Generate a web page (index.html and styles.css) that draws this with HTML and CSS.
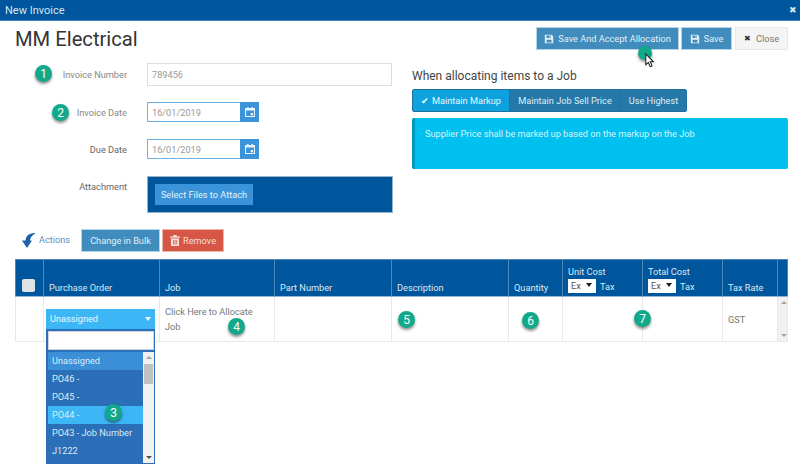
FILE: index.html
```html
<!DOCTYPE html>
<html lang="en">
<head>
  <meta charset="UTF-8">
  <title>New Invoice</title>
  <link rel="stylesheet" href="styles.css">
</head>
<body>
  <svg class="defs" width="0" height="0">
    <symbol id="icon-save" viewBox="0 0 12 12"><path fill-rule="evenodd" d="M1 1h8.200L11 2.800V11H1zM3 1.800v3h5.200v-3zM6.400 2.300h1.200v2H6.400zM3 7v3.200h6V7z"/></symbol>
    <symbol id="icon-cal" viewBox="0 0 14 14"><path fill-rule="evenodd" d="M3 0h2v1.500h4V0h2v1.500h3V14H0V1.500h3zM1.500 5v7.500h11V5zM8 8.500h3.200V11.500H8z"/></symbol>
  </svg>

  <div class="titlebar">
    <span>New Invoice</span>
    <span class="titlebar-close">✖</span>
  </div>

  <div class="top">
    <div class="left">
      <h1>MM Electrical</h1>
      <div class="form">
        <label>Invoice Number</label>
        <div class="input wide">789456</div>
        <label class="row-date">Invoice Date</label>
        <div class="date row-date">
          <div class="input">16/01/2019</div>
          <span class="cal"><svg width="14" height="14"><use href="#icon-cal"/></svg></span>
        </div>
        <label class="row-due">Due Date</label>
        <div class="date row-due">
          <div class="input">16/01/2019</div>
          <span class="cal"><svg width="14" height="14"><use href="#icon-cal"/></svg></span>
        </div>
        <label class="row-attach">Attachment</label>
        <div class="attach row-attach"><button class="btn btn-file">Select Files to Attach</button></div>
      </div>
    </div>

    <div class="right">
      <div class="toolbar">
        <button class="btn btn-blue btn-accept"><svg width="12" height="12"><use href="#icon-save"/></svg>Save And Accept Allocation</button>
        <button class="btn btn-blue btn-save"><svg width="12" height="12"><use href="#icon-save"/></svg>Save</button>
        <button class="btn btn-close"><span class="x">✖</span>Close</button>
      </div>
      <h2>When allocating items to a Job</h2>
      <div class="group">
        <span class="group-item active"><span class="tick">✔</span>Maintain Markup</span>
        <span class="group-item sell">Maintain Job Sell Price</span>
        <span class="group-item">Use Highest</span>
      </div>
      <div class="info">Supplier Price shall be marked up based on the markup on the Job</div>
    </div>
  </div>

  <div class="actions">
    <svg class="actions-arrow" width="14" height="15" viewBox="0 0 14 15"><path d="M13.500 0C8 0 3.800 2.200 3.600 7.500H0L5 15l5-7.500H8C8 5 9.800 2.500 13.500 0z"/></svg>
    <span class="actions-label">Actions</span>
    <button class="btn btn-blue btn-bulk">Change in Bulk</button>
    <button class="btn btn-red"><svg width="10" height="11" viewBox="0 0 10 11"><path fill-rule="evenodd" d="M3.500 0h3l.5 1.500h3v1.200H0V1.500h3zM1 3.500h8V11H1zM3 5v4.500h.8V5zm1.700 0v4.500h.8V5zm1.700 0v4.500h.8V5z"/></svg>Remove</button>
  </div>

  <table class="grid">
    <colgroup>
      <col class="c-check"><col class="c-po"><col class="c-job"><col class="c-part"><col class="c-desc">
      <col class="c-qty"><col class="c-cost"><col class="c-cost"><col class="c-tax"><col>
    </colgroup>
    <thead>
      <tr>
        <th><span class="checkbox"></span></th>
        <th>Purchase Order</th>
        <th>Job</th>
        <th>Part Number</th>
        <th>Description</th>
        <th>Quantity</th>
        <th>Unit Cost<div class="taxline"><span class="mini-select">Ex<i></i></span>Tax</div></th>
        <th>Total Cost<div class="taxline"><span class="mini-select">Ex<i></i></span>Tax</div></th>
        <th>Tax Rate</th>
        <th></th>
      </tr>
    </thead>
    <tbody>
      <tr>
        <td></td>
        <td class="po-cell">
          <div class="dropdown">
            <div class="dropdown-head">Unassigned<i></i></div>
            <div class="dropdown-panel">
              <div class="dropdown-search"></div>
              <div class="dropdown-body">
                <ul>
                  <li class="first">Unassigned</li>
                  <li>PO46 -</li>
                  <li>PO45 -</li>
                  <li class="hot">PO44 -</li>
                  <li>PO43 - Job Number</li>
                  <li>J1222</li>
                </ul>
                <div class="scroll">
                  <i class="up"></i>
                  <b></b>
                  <i class="down"></i>
                </div>
              </div>
            </div>
          </div>
        </td>
        <td class="job-cell">Click Here to Allocate<br>Job</td>
        <td></td>
        <td></td>
        <td></td>
        <td></td>
        <td></td>
        <td class="tax-cell">GST</td>
        <td class="row-scroll"><i class="up"></i><i class="down"></i></td>
      </tr>
    </tbody>
  </table>

  <!-- numbered callouts over the screenshot -->
  <span class="dot" style="left:35px;top:65px">1</span>
  <span class="dot" style="left:52px;top:104px">2</span>
  <span class="dot" style="left:105px;top:404px">3</span>
  <span class="dot" style="left:228px;top:318px">4</span>
  <span class="dot" style="left:398px;top:311px">5</span>
  <span class="dot" style="left:522px;top:312px">6</span>
  <span class="dot" style="left:634px;top:310px">7</span>
  <span class="dot dot-small" style="left:638px;top:46px"></span>
  <svg class="cursor" width="10" height="15" viewBox="0 0 13 19"><path d="M1 1v14l3.400-3 2.300 5.500 2.500-1-2.300-5.300H11z" fill="#fff" stroke="#222" stroke-width="1.400"/></svg>
</body>
</html>
```

FILE: styles.css
```css
html, body {
  margin: 0;
  padding: 0;
  height: 100%;
  overflow: hidden;
  background: #fff;
  font-family: Roboto, sans-serif;
  font-size: 9.200px;
  color: #555;
}

.defs {
  position: absolute;
}

.titlebar {
  display: flex;
  justify-content: space-between;
  align-items: center;
  height: 20px;
  padding: 0 3px 0 5px;
  background: #00569d;
  border-bottom: 1px solid #3f87c4;
  color: #d5e4f0;
  font-size: 11px;
}

.titlebar-close {
  font-size: 9px;
  color: #d5e4f0;
}

.top {
  display: flex;
  height: 208px;
}

.left {
  width: 397px;
  padding-left: 15px;
  box-sizing: border-box;
}

h1 {
  margin: 5px 0 0;
  font-size: 20.200px;
  line-height: 26px;
  font-weight: 400;
  color: #333;
}

.form {
  display: grid;
  grid-template-columns: 112px 246px;
  column-gap: 20px;
  margin-top: 11px;
  align-items: center;
}

.form label {
  text-align: right;
  color: #888;
}

.input {
  box-sizing: border-box;
  display: flex;
  align-items: center;
  height: 20px;
  padding-left: 4px;
  background: #fff;
  border: 1px solid #6db3e6;
  border-right: 0;
  color: #999;
  flex: 1;
}

.input.wide {
  height: 23px;
  border: 1px solid #ddd;
  width: 245px;
}

.date {
  display: flex;
  width: 112px;
}

.cal {
  display: flex;
  align-items: center;
  justify-content: center;
  width: 19px;
  height: 20px;
  background: #3b94d9;
}

.cal svg {
  width: 10px;
  height: 10px;
  fill: #e8f3fb;
}

.row-date {
  margin-top: 16px;
}

.row-due {
  margin-top: 17px;
}

.row-attach {
  margin-top: 17px;
  align-self: start;
}

label.row-attach {
  margin-top: 22px;
}

.form label.row-attach {
  color: #666;
}

.form label.row-due {
  color: #666;
}

.attach {
  box-sizing: border-box;
  display: flex;
  align-items: center;
  width: 246px;
  height: 37px;
  padding-left: 7px;
  background: #00569d;
  border: 1px solid #9cb4c9;
}

.btn {
  display: inline-flex;
  align-items: center;
  justify-content: center;
  box-sizing: border-box;
  margin: 0;
  padding: 0;
  border: 1px solid transparent;
  font-family: Roboto, sans-serif;
  font-size: 9.200px;
  white-space: nowrap;
}

.btn svg {
  fill: currentColor;
}

.btn-file {
  width: 98px;
  height: 21px;
  background: #3b94d9;
  color: #e4f1fb;
}

.btn-blue {
  background: #3f8cbd;
  border-color: #b5d3e7;
  color: #e3eff7;
}

.btn-accept {
  width: 143px;
  gap: 4px;
}

.btn-accept svg, .btn-save svg {
  width: 10px;
  height: 10px;
}

.btn-save {
  width: 51px;
  gap: 4px;
}

.btn-close {
  width: 53px;
  margin-left: 1px;
  gap: 5px;
  background: #f4f4f4;
  border-color: #e8e8e8;
  color: #777;
}

.x {
  font-size: 8px;
  color: #333;
}

.right {
  flex: 1;
  padding: 6px 12px 0 15px;
}

.toolbar {
  display: flex;
  justify-content: flex-end;
  gap: 2px;
  height: 23px;
}

h2 {
  margin: 19px 0 0;
  font-size: 12px;
  line-height: 15px;
  font-weight: 400;
  color: #444;
}

.group {
  display: flex;
  width: 275px;
  height: 23px;
  margin-top: 5px;
  background: #2479a9;
  border: 1px solid #1f6f9f;
  box-sizing: border-box;
  border-radius: 2px;
  color: #dfeef6;
  white-space: nowrap;
}

.group-item {
  display: flex;
  align-items: center;
  justify-content: center;
  box-sizing: border-box;
  flex: 1;
  border-right: 1px solid #1f6f9f;
}

.group-item:last-child {
  border-right: 0;
}

.group-item.active {
  flex: 0 0 97px;
  background: #0da2dd;
  color: #e7f6fc;
}

.group-item.sell {
  flex: 0 0 111px;
}

.tick {
  margin-right: 3px;
  font-size: 9px;
  color: #fff;
}

.info {
  box-sizing: border-box;
  height: 51px;
  margin-top: 6px;
  padding: 10px;
  background: #00c0ef;
  border-left: 3px solid #0097bc;
  border-radius: 2px;
  color: #d8f4fb;
}

.actions {
  display: flex;
  align-items: center;
  height: 23px;
  padding-left: 22px;
}

.actions-arrow {
  fill: #1d62a8;
}

.actions-label {
  width: 33px;
  margin: -2px 9px 0 3px;
  color: #5f8fbd;
}

.btn-bulk {
  width: 79px;
  height: 23px;
  margin-right: 2px;
}

.btn-red {
  gap: 3px;
  width: 62px;
  height: 23px;
  background: #d65745;
  border-color: #eeb5ab;
  color: #f8dfdb;
}

.grid {
  margin: 7px 0 0 15px;
  width: 773px;
  table-layout: fixed;
  border-collapse: collapse;
}

.c-check { width: 28px; }
.c-po { width: 116px; }
.c-job { width: 115px; }
.c-part { width: 117px; }
.c-desc { width: 117px; }
.c-qty { width: 54px; }
.c-cost { width: 80px; }
.c-tax { width: 55px; }

.grid th {
  height: 37px;
  padding: 0 5px 3px;
  box-sizing: border-box;
  vertical-align: bottom;
  text-align: left;
  font-weight: 400;
  background: #00569d;
  color: #dde9f3;
  border: 1px solid #4d87b8;
  border-bottom: 1px solid #8fb6d8;
}

.checkbox {
  display: block;
  width: 13px;
  height: 13px;
  margin: 0 0 1px 1px;
  background: #dfe3e6;
  border-radius: 2px;
}

.taxline {
  display: flex;
  align-items: center;
  gap: 4px;
  margin-top: 2px;
}

.mini-select {
  position: relative;
  box-sizing: border-box;
  width: 28px;
  height: 14px;
  padding-left: 3px;
  background: #fff;
  color: #555;
  line-height: 13px;
}

.mini-select i {
  position: absolute;
  right: 4px;
  top: 4px;
  border: 3px solid transparent;
  border-top: 4px solid #222;
  border-bottom: 0;
}

.grid td {
  height: 45px;
  padding: 0 5px;
  box-sizing: border-box;
  border: 1px solid #e8e8e8;
  border-top: 0;
  color: #777;
  vertical-align: middle;
}

.job-cell {
  line-height: 15px;
}

.po-cell {
  position: relative;
}

.dropdown {
  position: absolute;
  left: 2px;
  top: 12px;
  width: 109px;
  z-index: 2;
}

.dropdown-head {
  position: relative;
  height: 20px;
  padding-left: 4px;
  box-sizing: border-box;
  background: #3db6f5;
  color: #e9f8ff;
  line-height: 19px;
}

.dropdown-head i {
  position: absolute;
  right: 4px;
  top: 8px;
  border: 3px solid transparent;
  border-top: 4px solid #eef8ff;
  border-bottom: 0;
}

.dropdown-panel {
  padding: 2px 1px 2px 2px;
  background: #2a6fb8;
  box-sizing: border-box;
  height: 135px;
}

.dropdown-search {
  box-sizing: border-box;
  height: 19px;
  background: #fff;
  border: 1px solid #c9d6e2;
}

.dropdown-body {
  display: flex;
  height: 111px;
  margin-top: 2px;
  overflow: hidden;
}

.dropdown-body ul {
  flex: 1;
  margin: 0;
  padding: 0;
  list-style: none;
  color: #dcebf7;
}

.dropdown-body li {
  height: 18px;
  padding-left: 4px;
  line-height: 18px;
}

.dropdown-body li.first {
  background: #3a8fd6;
}

.dropdown-body li.hot {
  background: #3db6f5;
}

.scroll {
  position: relative;
  width: 11px;
  background: #f1f1f1;
}

.scroll b {
  display: block;
  width: 9px;
  height: 20px;
  margin: 12px 1px 0;
  background: #c1c1c1;
}

.scroll .up, .row-scroll .up {
  position: absolute;
  left: 3px;
  top: 4px;
  border: 3px solid transparent;
  border-bottom: 3px solid #a3a3a3;
  border-top: 0;
}

.scroll .down, .row-scroll .down {
  position: absolute;
  left: 3px;
  bottom: 4px;
  border: 3px solid transparent;
  border-top: 3px solid #505050;
  border-bottom: 0;
}

.grid td.row-scroll {
  position: relative;
  padding: 0;
  background: #f1f1f1;
  border-left: 0;
}

.row-scroll .down {
  border-top-color: #a3a3a3;
}

.dot {
  position: absolute;
  display: flex;
  align-items: center;
  justify-content: center;
  width: 17px;
  height: 17px;
  border-radius: 50%;
  background: #12a88a;
  color: #fff;
  font-size: 12px;
  box-shadow: 0 2px 3px rgba(0, 0, 0, 0.45);
  z-index: 3;
}

.dot-small {
  width: 14px;
  height: 14px;
}

.cursor {
  position: absolute;
  left: 645px;
  top: 53px;
  z-index: 4;
}
```
